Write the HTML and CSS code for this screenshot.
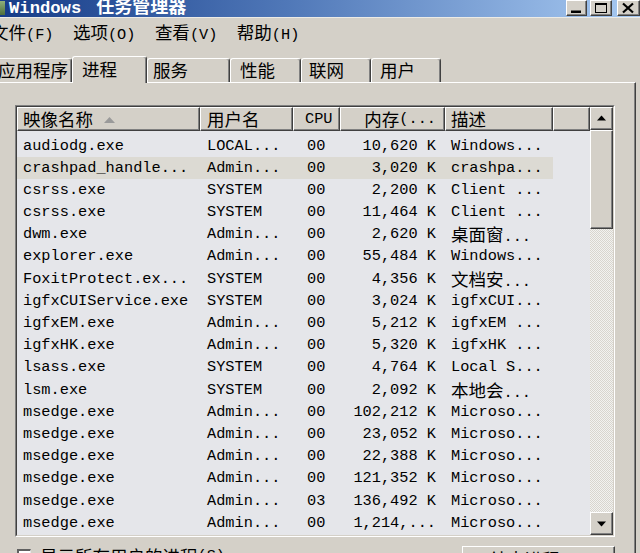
FILE: index.html
```html
<!DOCTYPE html>
<html lang="zh-CN">
<head>
<meta charset="utf-8">
<title>Windows 任务管理器</title>
<link rel="stylesheet" href="styles.css">
</head>
<body>
<div class="window">
  <div class="titlebar">
    <span class="app-icon"></span>
    <span class="title"><span class="lat">Windows</span><span class="c">任务管理器</span></span>
    <div class="tb-buttons">
      <span class="tb-btn min"><svg width="19" height="14" viewBox="0 0 19 14"><rect x="4" y="9.5" width="10" height="2.5" fill="#000"/></svg></span>
      <span class="tb-btn max"><svg width="20" height="14" viewBox="0 0 20 14"><rect x="4.5" y="2.5" width="11" height="9" fill="none" stroke="#000" stroke-width="1"/><rect x="4" y="2" width="12" height="2" fill="#000"/></svg></span>
      <span class="tb-btn close"><svg width="21" height="14" viewBox="0 0 21 14"><path d="M5 2.5 L15 11.5 M15 2.5 L5 11.5" stroke="#000" stroke-width="2.2" fill="none"/></svg></span>
    </div>
  </div>

  <div class="menubar">
    <span class="menu-item"><span class="c">文件</span>(F)</span>
    <span class="menu-item"><span class="c">选项</span>(O)</span>
    <span class="menu-item"><span class="c">查看</span>(V)</span>
    <span class="menu-item"><span class="c">帮助</span>(H)</span>
  </div>

  <div class="tabs">
    <span class="tab t1"><span class="c">应用程序</span></span>
    <span class="tab t2 active"><span class="c">进程</span></span>
    <span class="tab t3"><span class="c">服务</span></span>
    <span class="tab t4"><span class="c">性能</span></span>
    <span class="tab t5"><span class="c">联网</span></span>
    <span class="tab t6"><span class="c">用户</span></span>
  </div>

  <div class="panel">
    <div class="listview">
      <div class="lv-inner">
        <div class="list-main">
          <div class="header">
            <span class="hcell h-name"><span class="c">映像名称</span><svg class="sort" width="11" height="6" viewBox="0 0 11 6"><polygon points="5.5,0 11,6 0,6" fill="#9a9a9a"/></svg></span>
            <span class="hcell h-user"><span class="c">用户名</span></span>
            <span class="hcell h-cpu">CPU</span>
            <span class="hcell h-mem"><span class="c">内存</span>(...</span>
            <span class="hcell h-desc"><span class="c">描述</span></span>
            <span class="hcell h-fill"></span>
          </div>
          <div class="rows">
            <div class="row"><span class="n">audiodg.exe</span><span class="u">LOCAL...</span><span class="p">00</span><span class="m">10,620 K</span><span class="d">Windows...</span></div>
            <div class="row sel"><span class="n">crashpad_handle...</span><span class="u">Admin...</span><span class="p">00</span><span class="m">3,020 K</span><span class="d">crashpa...</span></div>
            <div class="row"><span class="n">csrss.exe</span><span class="u">SYSTEM</span><span class="p">00</span><span class="m">2,200 K</span><span class="d">Client ...</span></div>
            <div class="row"><span class="n">csrss.exe</span><span class="u">SYSTEM</span><span class="p">00</span><span class="m">11,464 K</span><span class="d">Client ...</span></div>
            <div class="row"><span class="n">dwm.exe</span><span class="u">Admin...</span><span class="p">00</span><span class="m">2,620 K</span><span class="d"><span class="c">桌面窗</span>...</span></div>
            <div class="row"><span class="n">explorer.exe</span><span class="u">Admin...</span><span class="p">00</span><span class="m">55,484 K</span><span class="d">Windows...</span></div>
            <div class="row"><span class="n">FoxitProtect.ex...</span><span class="u">SYSTEM</span><span class="p">00</span><span class="m">4,356 K</span><span class="d"><span class="c">文档安</span>...</span></div>
            <div class="row"><span class="n">igfxCUIService.exe</span><span class="u">SYSTEM</span><span class="p">00</span><span class="m">3,024 K</span><span class="d">igfxCUI...</span></div>
            <div class="row"><span class="n">igfxEM.exe</span><span class="u">Admin...</span><span class="p">00</span><span class="m">5,212 K</span><span class="d">igfxEM ...</span></div>
            <div class="row"><span class="n">igfxHK.exe</span><span class="u">Admin...</span><span class="p">00</span><span class="m">5,320 K</span><span class="d">igfxHK ...</span></div>
            <div class="row"><span class="n">lsass.exe</span><span class="u">SYSTEM</span><span class="p">00</span><span class="m">4,764 K</span><span class="d">Local S...</span></div>
            <div class="row"><span class="n">lsm.exe</span><span class="u">SYSTEM</span><span class="p">00</span><span class="m">2,092 K</span><span class="d"><span class="c">本地会</span>...</span></div>
            <div class="row"><span class="n">msedge.exe</span><span class="u">Admin...</span><span class="p">00</span><span class="m">102,212 K</span><span class="d">Microso...</span></div>
            <div class="row"><span class="n">msedge.exe</span><span class="u">Admin...</span><span class="p">00</span><span class="m">23,052 K</span><span class="d">Microso...</span></div>
            <div class="row"><span class="n">msedge.exe</span><span class="u">Admin...</span><span class="p">00</span><span class="m">22,388 K</span><span class="d">Microso...</span></div>
            <div class="row"><span class="n">msedge.exe</span><span class="u">Admin...</span><span class="p">00</span><span class="m">121,352 K</span><span class="d">Microso...</span></div>
            <div class="row"><span class="n">msedge.exe</span><span class="u">Admin...</span><span class="p">03</span><span class="m">136,492 K</span><span class="d">Microso...</span></div>
            <div class="row"><span class="n">msedge.exe</span><span class="u">Admin...</span><span class="p">00</span><span class="m">1,214,...</span><span class="d">Microso...</span></div>
          </div>
        </div>
        <div class="scrollbar">
          <span class="sb-btn"><svg width="21" height="21" viewBox="0 0 21 21"><polygon points="10.5,7.5 15,12.5 6,12.5" fill="#000"/></svg></span>
          <span class="sb-thumb"></span>
          <span class="sb-track"></span>
          <span class="sb-btn"><svg width="21" height="21" viewBox="0 0 21 21"><polygon points="6,8.5 15,8.5 10.5,13.5" fill="#000"/></svg></span>
        </div>
      </div>
    </div>
    <div class="bottom">
      <label class="check"><span class="box"></span><span class="c">显示所有用户的进程</span>(S)</label>
      <span class="end-btn"><span class="c">结束进程</span>(E)</span>
    </div>
  </div>
</div>
</body>
</html>
```
FILE: styles.css
```css
html, body {
  margin: 0;
  padding: 0;
}
body {
  width: 640px;
  height: 553px;
  overflow: hidden;
  background: #d4d0c8;
  font-family: "Liberation Mono", "Noto Sans CJK SC", monospace;
  font-size: 15.3px;
  color: #000;
}
.c {
  font-family: "Noto Sans CJK SC", sans-serif;
  font-size: 17.5px;
}
.window {
  width: 640px;
  height: 553px;
  overflow: hidden;
}

/* title bar */
.titlebar {
  height: 17px;
  display: flex;
  align-items: flex-start;
  background: linear-gradient(90deg, #163c88 0%, #5078b8 45%, #a8caf2 100%);
  overflow: hidden;
  color: #fff;
}
.app-icon {
  width: 5px;
  height: 14px;
  margin-top: 1px;
  background: linear-gradient(#8fb07a, #4d6e3c);
}
.title {
  margin-left: 4px;
  margin-top: -3px;
  line-height: 17px;
  font-weight: bold;
  white-space: nowrap;
}
.title .lat {
  font-size: 17.2px;
}
.title .c {
  font-size: 18px;
  font-weight: bold;
  margin-left: 15px;
}
.tb-buttons {
  margin-left: auto;
  display: flex;
}
.tb-btn {
  box-sizing: border-box;
  height: 16px;
  background: #d4d0c8;
  border-top: 1px solid #fff;
  border-left: 1px solid #fff;
  border-right: 1px solid #404040;
  border-bottom: 1px solid #404040;
  box-shadow: inset -1px -1px #808080;
  display: flex;
}
.tb-btn svg { display: block; }
.min { width: 21px; }
.max { width: 22px; margin-left: 3px; }
.close { width: 23px; margin-left: 5px; }

/* menu */
.menubar {
  height: 30px;
  border-top: 1px solid #ecebe6;
  display: flex;
  align-items: center;
  gap: 19.4px;
  margin-left: -9px;
  line-height: 30px;
  white-space: nowrap;
}

/* tabs */
.tabs {
  height: 34px;
  display: flex;
  align-items: flex-end;
  margin-left: -7px;
  position: relative;
  z-index: 1;
}
.tab {
  box-sizing: border-box;
  height: 24px;
  line-height: 22px;
  border-top: 1px solid #fff;
  border-left: 1px solid #fff;
  border-right: 1px solid #404040;
  box-shadow: inset -1px 0 #808080;
  border-radius: 3px 3px 0 0;
  background: #d4d0c8;
  white-space: nowrap;
  overflow: hidden;
}
.tab.active {
  height: 27px;
  margin-bottom: -1px;
  line-height: 24px;
}
.t1 { width: 79px; padding-left: 4px; }
.t2 { width: 75px; padding-left: 9px; }
.t3 { width: 83px; padding-left: 5px; }
.t4 { width: 71px; padding-left: 9px; }
.t5 { width: 70px; padding-left: 7px; }
.t6 { width: 70px; padding-left: 8px; }

/* panel */
.panel {
  box-sizing: border-box;
  width: 636px;
  height: 471px;
  border-top: 1px solid #fff;
  border-right: 1px solid #404040;
  box-shadow: inset -1px 0 #808080;
  padding: 22px 0 0 15px;
}
.listview {
  box-sizing: border-box;
  width: 600px;
  height: 432px;
  border-top: 1px solid #808080;
  border-left: 1px solid #808080;
  border-right: 1px solid #fff;
  border-bottom: 1px solid #fff;
}
.lv-inner {
  box-sizing: border-box;
  height: 100%;
  display: flex;
  border-top: 1px solid #404040;
  border-left: 1px solid #404040;
  border-right: 1px solid #d4d0c8;
  border-bottom: 1px solid #d4d0c8;
  background: #e5e6ea;
}
.list-main {
  width: 573px;
  overflow: hidden;
}
.header {
  display: flex;
  height: 24px;
}
.hcell {
  box-sizing: border-box;
  height: 24px;
  line-height: 22px;
  background: #d4d0c8;
  border-top: 1px solid #fff;
  border-left: 1px solid #fff;
  border-right: 1px solid #404040;
  border-bottom: 1px solid #404040;
  box-shadow: inset -1px -1px #808080;
  white-space: pre;
  display: flex;
  align-items: center;
}
.h-name { width: 183px; padding-left: 5px; }
.h-user { width: 93px; padding-left: 6px; }
.h-cpu { width: 47px; padding-left: 11px; }
.h-mem { width: 105px; justify-content: flex-end; padding-right: 8px; }
.h-desc { width: 108px; padding-left: 5px; }
.h-fill { width: 37px; }
.sort { margin-left: 11px; margin-top: 1px; }

.rows {
  padding-top: 3.5px;
}
.row {
  display: flex;
  width: 536px;
  height: 22.2px;
  line-height: 22.2px;
  white-space: pre;
}
.row > span {
  box-sizing: border-box;
  height: 22.2px;
  overflow: hidden;
}
.row.sel {
  background: #dcdad3;
}
.n { width: 183px; padding-left: 6px; }
.u { width: 93px; padding-left: 7px; }
.p { width: 47px; padding-left: 14px; }
.m { width: 105px; text-align: right; padding-right: 9px; }
.d { width: 108px; padding-left: 6px; }

/* scrollbar */
.scrollbar {
  width: 23px;
  display: flex;
  flex-direction: column;
}
.sb-btn, .sb-thumb {
  box-sizing: border-box;
  background: #d4d0c8;
  border-top: 1px solid #fff;
  border-left: 1px solid #fff;
  border-right: 1px solid #404040;
  border-bottom: 1px solid #404040;
  box-shadow: inset -1px -1px #808080;
}
.sb-btn {
  height: 23px;
  display: flex;
}
.sb-btn svg { display: block; }
.sb-thumb {
  height: 99px;
}
.sb-track {
  flex: 1;
  background: repeating-conic-gradient(#d8d5ce 0 25%, #f2f2f0 0 50%) 0 0 / 2px 2px;
}

/* bottom */
.bottom {
  width: 600px;
  margin-top: 9px;
  display: flex;
  align-items: flex-start;
  white-space: nowrap;
}
.check {
  display: flex;
  align-items: center;
  margin-left: 2px;
  margin-top: 1px;
  line-height: 18px;
}
.box {
  box-sizing: border-box;
  width: 14px;
  height: 14px;
  background: #fff;
  border-top: 2px solid #606060;
  border-left: 2px solid #606060;
  border-right: 1px solid #e8e8e8;
  border-bottom: 1px solid #e8e8e8;
  margin-right: 9px;
}
.end-btn {
  margin-left: auto;
  box-sizing: border-box;
  width: 153px;
  height: 25px;
  line-height: 23px;
  text-align: center;
  background: #d4d0c8;
  border-top: 1px solid #fff;
  border-left: 1px solid #fff;
  border-right: 1px solid #404040;
  border-bottom: 1px solid #404040;
  box-shadow: inset -1px -1px #808080;
}
```
